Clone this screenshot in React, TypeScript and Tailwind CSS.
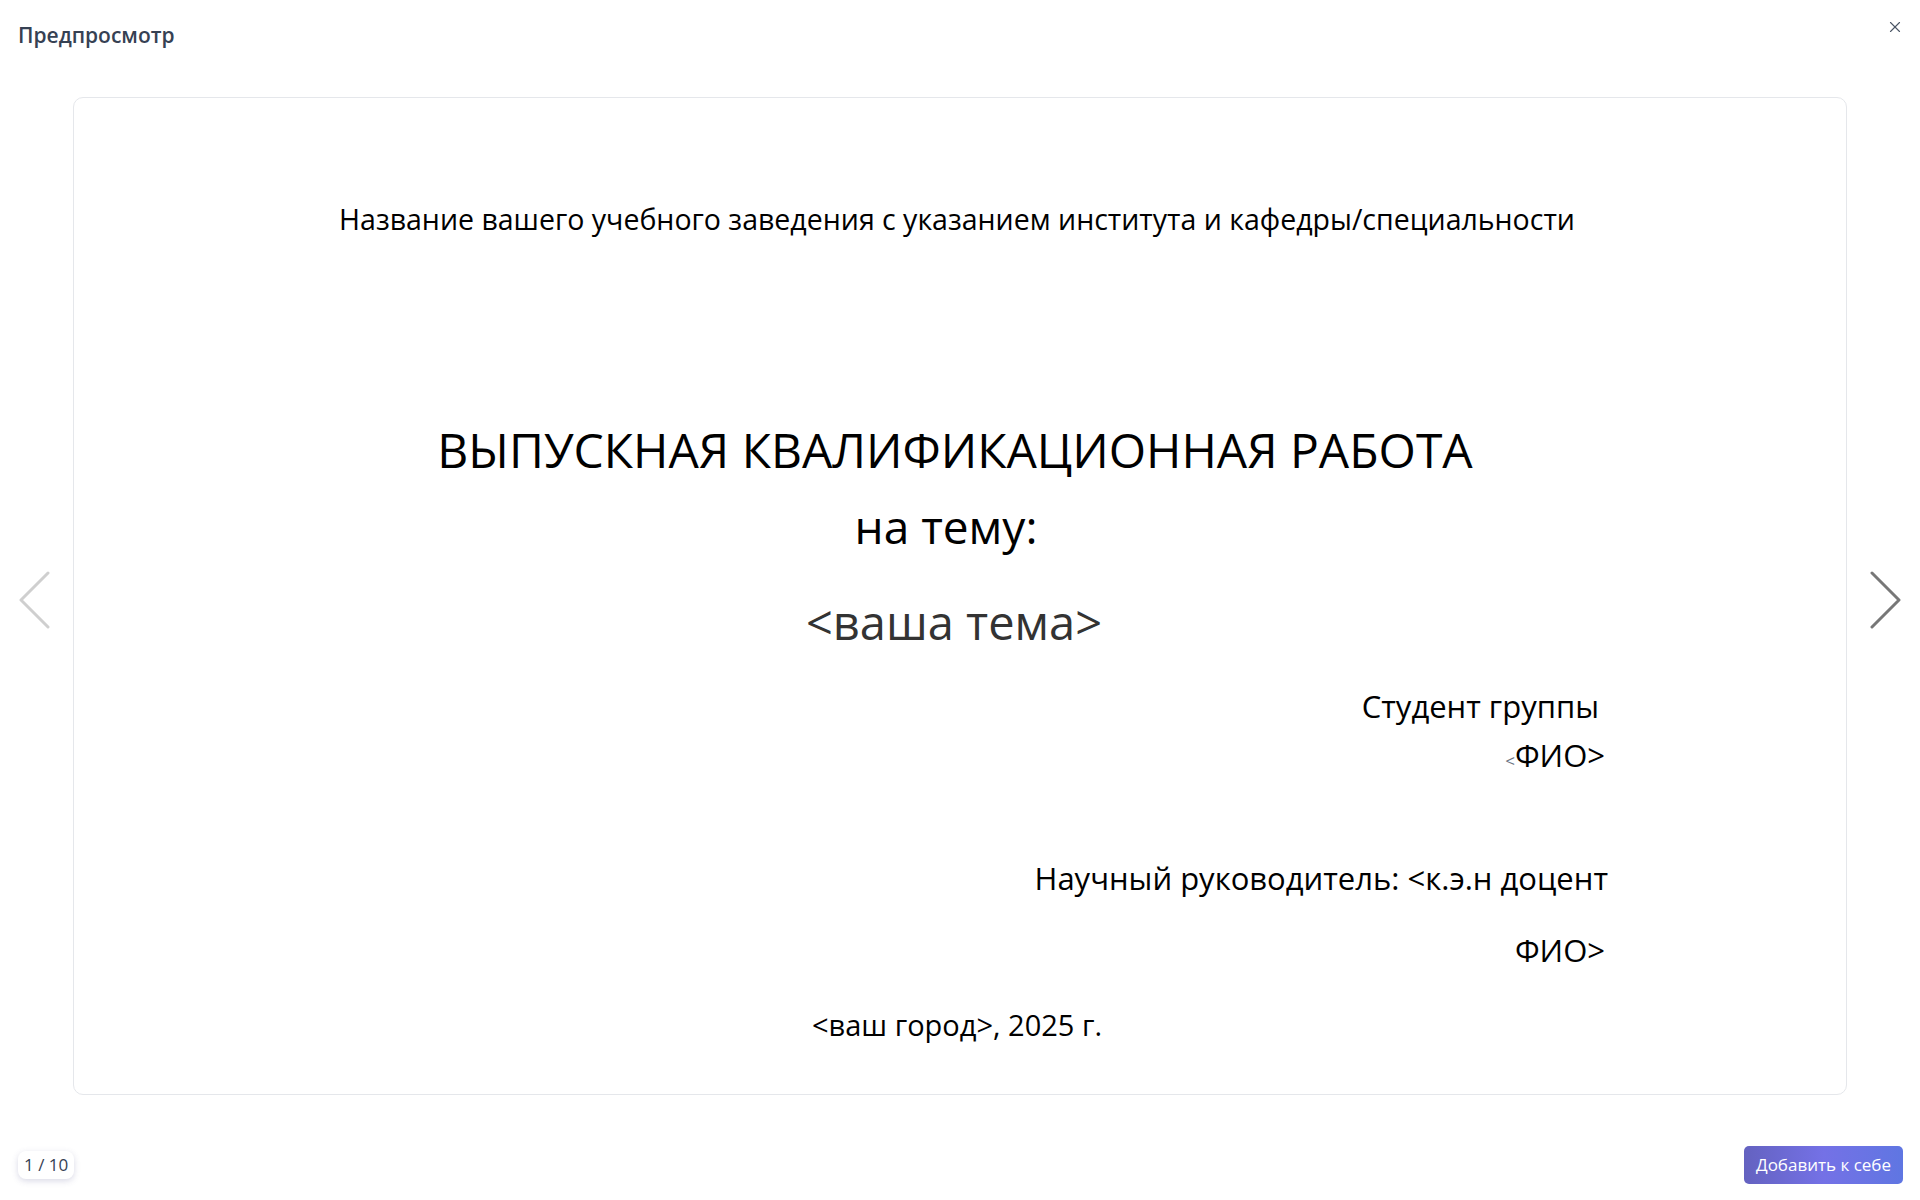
import { X } from "lucide-react";

const doc = "font-['Open_Sans','Noto_Sans',sans-serif] text-black";

function Arrow({ dir, color }: { dir: "left" | "right"; color: string }) {
  const pts = dir === "left" ? "29,2 2,29 29,56" : "2,2 29,29 2,56";
  return (
    <svg width="31" height="58" viewBox="0 0 31 58" className={color}>
      <polyline points={pts} fill="none" stroke="currentColor" strokeWidth="3" strokeLinecap="round" strokeLinejoin="round" />
    </svg>
  );
}

export default function App() {
  return (
    <div className="h-screen w-full bg-white flex flex-col font-['Open_Sans','Noto_Sans',sans-serif] overflow-hidden">
      {/* header */}
      <div className="h-[70px] flex items-center justify-between pl-[18px] pr-[16px] shrink-0">
        <h1 className="text-[21px] font-semibold text-gray-700 leading-none">Предпросмотр</h1>
        <button className="text-gray-600 self-start mt-[18px]">
          <X className="w-[18px] h-[18px]" strokeWidth={1.5} />
        </button>
      </div>

      {/* body */}
      <div className="flex items-center mt-[27px] shrink-0">
        <div className="w-[73px] flex pl-[19px] mt-[8px]">
          <button>
            <Arrow dir="left" color="text-[#cfcfcf]" />
          </button>
        </div>

        <div className={`flex-1 h-[998px] border border-gray-200 rounded-[10px] flex flex-col pt-[101px] ${doc}`}>
          <p className="text-center text-[28.5px] leading-[40px] pr-[6px]">
            Название вашего учебного заведения с указанием института и кафедры/специальности
          </p>
          <p className="mt-[180px] text-center text-[48px] leading-[62px] pr-[10px]">
            ВЫПУСКНАЯ КВАЛИФИКАЦИОННАЯ РАБОТА
          </p>
          <p className="mt-[14px] text-center text-[46px] leading-[62px] pr-[28px]">на тему:</p>
          <p className="mt-[34px] text-center text-[47px] leading-[62px] text-[#333333] pr-[12px]">
            &lt;ваша тема&gt;
          </p>
          <div className="pr-[241px] flex flex-col items-end">
            <p className="mt-[33px] text-[31px] leading-[40px] pr-[6px]">Студент группы</p>
            <p className="mt-[9px] text-[31px] leading-[40px]">
              <span className="text-[17px] text-gray-500">&lt;</span>ФИО&gt;
            </p>
            <p className="mt-[77px] text-[31px] leading-[40px] -mr-[3px]">
              Научный руководитель: &lt;к.э.н доцент
            </p>
            <p className="mt-[32px] text-[31px] leading-[40px]">ФИО&gt;</p>
          </div>
          <p className="mt-[35px] text-center text-[29px] leading-[40px] pr-[6px]">&lt;ваш город&gt;, 2025 г.</p>
        </div>

        <div className="w-[73px] flex justify-end pr-[19px] mt-[8px]">
          <button>
            <Arrow dir="right" color="text-[#777777]" />
          </button>
        </div>
      </div>

      {/* footer */}
      <div className="flex-1 flex items-center justify-between pl-[18px] pr-[17px] pt-[34px]">
        <span className="px-[6px] h-[28px] flex items-center rounded-[8px] bg-white shadow-[0_2px_6px_rgba(80,80,140,0.22)] text-[17px] text-gray-700">
          1 / 10
        </span>
        <button className="h-[38px] px-[12px] rounded-[5px] text-white text-[17px] bg-gradient-to-r from-[#6462c0] via-[#7471e6] to-[#5f76e2]">
          Добавить к себе
        </button>
      </div>
    </div>
  );
}
